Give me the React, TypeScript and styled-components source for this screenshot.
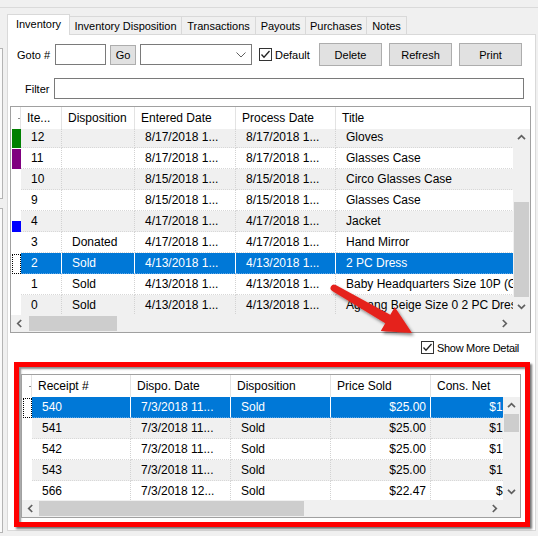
import React from 'react';
import styled, { createGlobalStyle } from 'styled-components';

const GlobalStyle = createGlobalStyle`
  html, body { margin: 0; padding: 0; background: #f0f0f0; }
  body {
    font-family: "Liberation Sans", Arial, sans-serif;
    font-size: 11px;
    color: #000;
  }
  * { box-sizing: border-box; }
`;

const Screen = styled.div`
  position: relative;
  width: 538px;
  height: 536px;
  overflow: hidden;
  display: flex;
  flex-direction: column;
  background: #f0f0f0;
`;

const TopRule = styled.div`
  height: 8px;
  flex: none;
  border-bottom: 1px solid #dadada;
`;

const Main = styled.div`
  flex: 1;
  display: flex;
`;

/* fragments of the panel cut off on the left */
const SideStub = styled.div`
  width: 7px;
  flex: none;
  display: flex;
  flex-direction: column;
`;

const StubPanel = styled.div<{ $top: number; $height: number }>`
  margin-top: ${p => p.$top}px;
  height: ${p => p.$height}px;
  width: 3px;
  background: #fafafa;
  border: 1px solid #b4b4b4;
  border-left: none;
`;

const TabControl = styled.div`
  width: 529px;
  flex: none;
  margin-top: 6px;
  display: flex;
  flex-direction: column;
`;

const TabStrip = styled.div`
  height: 20px;
  display: flex;
  align-items: flex-end;
  position: relative;
  z-index: 1;
`;

const Tab = styled.div<{ $width: number; $active?: boolean }>`
  width: ${p => p.$width}px;
  height: ${p => (p.$active ? 21 : 18)}px;
  margin-bottom: ${p => (p.$active ? -1 : 0)}px;
  margin-left: -1px;
  &:first-child { margin-left: 0; }
  position: relative;
  z-index: ${p => (p.$active ? 2 : 1)};
  display: flex;
  align-items: center;
  justify-content: center;
  padding-bottom: ${p => (p.$active ? 2 : 0)}px;
  background: ${p => (p.$active ? '#ffffff' : '#f0f0f0')};
  border: 1px solid #d9d9d9;
  border-bottom: none;
  white-space: nowrap;
`;

const TabPage = styled.div`
  height: 497px;
  background: #fff;
  border: 1px solid #d9d9d9;
  display: flex;
  flex-direction: column;
`;

const ToolbarRow = styled.div`
  margin-top: 8px;
  height: 23px;
  display: flex;
  align-items: center;
  padding: 0 13px 0 9px;
`;

const FieldLabel = styled.span<{ $width: number }>`
  width: ${p => p.$width}px;
  flex: none;
  white-space: nowrap;
`;

const TextBox = styled.div<{ $width?: number }>`
  height: 21px;
  width: ${p => (p.$width ? `${p.$width}px` : 'auto')};
  flex: ${p => (p.$width ? 'none' : '1')};
  background: #fff;
  border: 1px solid #7a7a7a;
`;

const Button = styled.div<{ $width: number; $height: number; $gap: string }>`
  width: ${p => p.$width}px;
  height: ${p => p.$height}px;
  margin-left: ${p => p.$gap};
  flex: none;
  display: flex;
  align-items: center;
  justify-content: center;
  background: #e1e1e1;
  border: 1px solid #adadad;
`;

const Combo = styled.div`
  margin-left: 4px;
  width: 112px;
  height: 21px;
  flex: none;
  display: flex;
  align-items: center;
  justify-content: flex-end;
  padding-right: 5px;
  background: #fff;
  border: 1px solid #7a7a7a;
`;

const CheckGroup = styled.label<{ $gap: number; $tight?: boolean }>`
  margin-left: ${p => p.$gap}px;
  display: flex;
  align-items: center;
  gap: 3px;
  white-space: nowrap;
  letter-spacing: ${p => (p.$tight ? '-0.3px' : 'normal')};
`;

const CheckSquare = styled.span`
  width: 13px;
  height: 13px;
  flex: none;
  display: flex;
  align-items: center;
  justify-content: center;
  background: #fff;
  border: 1px solid #333;
`;

const FilterRow = styled.div`
  margin-top: 12px;
  height: 21px;
  display: flex;
  align-items: center;
  padding: 0 11px 0 17px;
`;

const MainGridSlot = styled.div`
  margin: 7px 4px 0 2px;
`;

const DetailRow = styled.div`
  height: 29px;
  display: flex;
  align-items: center;
  padding-left: 413px;
`;

/* red annotation frame round the detail grid */
const Highlight = styled.div`
  margin-left: 6px;
  width: 516px;
  height: 165px;
  padding: 7px 4px 4px 2px;
  background: #fff;
  border: 5px solid #ff0000;
  box-shadow: 2px 2px 2px rgba(0, 0, 0, 0.55), inset 2px 2px 2px rgba(0, 0, 0, 0.45);
`;

/* ---------- data grid ---------- */

const GridFrame = styled.div<{ $height: number }>`
  height: ${p => p.$height}px;
  display: flex;
  flex-direction: column;
  background: #fff;
  border: 1px solid #a0a0a0;
  font-size: 12px;
  overflow: hidden;
`;

const HeaderRow = styled.div`
  height: 22px;
  flex: none;
  display: flex;
  background: #fff;
  overflow: hidden;
`;

const HeadCorner = styled.div`
  width: 10px;
  flex: none;
  display: flex;
  align-items: center;
  justify-content: flex-end;
  border-right: 1px solid #e3e3e3;
`;

const Tick = styled.span`
  width: 2px;
  height: 1px;
  margin-top: 1px;
  background: #8a8a8a;
`;

const HeaderCell = styled.div<{ $width: number }>`
  width: ${p => p.$width}px;
  flex: none;
  padding-left: 6px;
  line-height: 22px;
  border-right: 1px solid #e3e3e3;
  white-space: nowrap;
  overflow: hidden;
`;

const Body = styled.div<{ $height: number }>`
  height: ${p => p.$height}px;
  flex: none;
  display: flex;
`;

const Viewport = styled.div`
  flex: 1;
  min-width: 0;
  overflow: hidden;
`;

const RowList = styled.div<{ $offset: number }>`
  margin-top: -${p => p.$offset}px;
`;

const BodyRow = styled.div<{ $tone: 'plain' | 'stripe' | 'selected' }>`
  height: 21px;
  display: flex;
  background: ${p => (p.$tone === 'selected' ? '#0078d7' : p.$tone === 'stripe' ? '#f0f0f0' : '#fff')};
  color: ${p => (p.$tone === 'selected' ? '#fff' : '#000')};
`;

const RowHead = styled.div`
  width: 10px;
  flex: none;
  display: flex;
  align-items: flex-end;
  padding-left: 1px;
  background: #fff;
`;

const Marker = styled.span<{ $color: string; $height: number }>`
  width: 9px;
  height: ${p => p.$height}px;
  background: ${p => p.$color};
`;

const FocusBox = styled.span`
  width: 9px;
  height: 20px;
  border: 1px dotted #000;
`;

const Cell = styled.div<{ $width: number; $right?: boolean; $selected?: boolean }>`
  width: ${p => p.$width}px;
  flex: none;
  padding: ${p => (p.$right ? '0 4px 0 0' : '0 0 0 10px')};
  text-align: ${p => (p.$right ? 'right' : 'left')};
  line-height: 20px;
  white-space: nowrap;
  overflow: hidden;
  border-right: 1px ${p => (p.$selected ? 'solid #ffffff' : 'dotted #d2d2d2')};
  border-bottom: 1px dotted ${p => (p.$selected ? '#5aa5e6' : '#d8d8d8')};
`;

const VBar = styled.div`
  width: 17px;
  flex: none;
  display: flex;
  flex-direction: column;
  background: #f0f0f0;
`;

const ArrowBox = styled.div`
  width: 17px;
  height: 17px;
  flex: none;
  display: flex;
  align-items: center;
  justify-content: center;
`;

const VTrack = styled.div`
  flex: 1;
  display: flex;
  flex-direction: column;
  align-items: center;
`;

const VThumb = styled.div<{ $offset: number; $size: number }>`
  margin-top: ${p => p.$offset}px;
  height: ${p => p.$size}px;
  width: 15px;
  background: #cdcdcd;
`;

const HBar = styled.div`
  height: 17px;
  flex: none;
  display: flex;
  background: #f0f0f0;
`;

const HTrack = styled.div`
  flex: 1;
  display: flex;
  align-items: center;
`;

const HThumb = styled.div<{ $offset: number; $size: number }>`
  margin-left: ${p => p.$offset}px;
  width: ${p => p.$size}px;
  height: 15px;
  background: #cdcdcd;
`;

const Corner = styled.div`
  width: 17px;
  flex: none;
`;

const ChevronSvg = styled.svg<{ $rot: number }>`
  display: block;
  transform: rotate(${p => p.$rot}deg);
`;

const Overlay = styled.svg`
  position: absolute;
  left: 0;
  top: 0;
  pointer-events: none;
`;

type Dir = 'up' | 'down' | 'left' | 'right';
const rotations: Record<Dir, number> = { up: 0, right: 90, down: 180, left: 270 };

const Chevron = ({ dir }: { dir: Dir }) => (
  <ChevronSvg $rot={rotations[dir]} width="9" height="9" viewBox="0 0 9 9">
    <polyline points="1,6.2 4.5,2.7 8,6.2" fill="none" stroke="#606060" strokeWidth="1.7" />
  </ChevronSvg>
);

const Check = () => (
  <svg width="11" height="11" viewBox="0 0 11 11">
    <polyline points="1.5,5.5 4,8.3 9.5,2" fill="none" stroke="#222" strokeWidth="1.3" />
  </svg>
);

interface Column {
  title: string;
  width: number;
  right?: boolean;
}

interface Row {
  cells: string[];
  marker?: { color: string; height: number };
}

interface GridProps {
  columns: Column[];
  rows: Row[];
  selected: number;
  stripe: 0 | 1;
  height: number;
  bodyHeight: number;
  scrollTop: number;
  vThumb: [number, number];
  hThumb: [number, number];
}

const DataGrid = ({ columns, rows, selected, stripe, height, bodyHeight, scrollTop, vThumb, hThumb }: GridProps) => (
  <GridFrame $height={height}>
    <HeaderRow>
      <HeadCorner>
        <Tick />
      </HeadCorner>
      {columns.map(c => (
        <HeaderCell key={c.title} $width={c.width}>
          {c.title}
        </HeaderCell>
      ))}
    </HeaderRow>
    <Body $height={bodyHeight}>
      <Viewport>
        <RowList $offset={scrollTop}>
          {rows.map((r, i) => {
            const isSel = i === selected;
            const tone = isSel ? 'selected' : i % 2 === stripe ? 'stripe' : 'plain';
            return (
              <BodyRow key={i} $tone={tone}>
                <RowHead>
                  {isSel && <FocusBox />}
                  {r.marker && <Marker $color={r.marker.color} $height={r.marker.height} />}
                </RowHead>
                {columns.map((c, j) => (
                  <Cell key={c.title} $width={c.width} $right={c.right} $selected={isSel}>
                    {r.cells[j]}
                  </Cell>
                ))}
              </BodyRow>
            );
          })}
        </RowList>
      </Viewport>
      <VBar>
        <ArrowBox>
          <Chevron dir="up" />
        </ArrowBox>
        <VTrack>
          <VThumb $offset={vThumb[0]} $size={vThumb[1]} />
        </VTrack>
        <ArrowBox>
          <Chevron dir="down" />
        </ArrowBox>
      </VBar>
    </Body>
    <HBar>
      <ArrowBox>
        <Chevron dir="left" />
      </ArrowBox>
      <HTrack>
        <HThumb $offset={hThumb[0]} $size={hThumb[1]} />
      </HTrack>
      <ArrowBox>
        <Chevron dir="right" />
      </ArrowBox>
      <Corner />
    </HBar>
  </GridFrame>
);

const tabs = [
  { label: 'Inventory', width: 63 },
  { label: 'Inventory Disposition', width: 113 },
  { label: 'Transactions', width: 75 },
  { label: 'Payouts', width: 51 },
  { label: 'Purchases', width: 62 },
  { label: 'Notes', width: 41 },
];

const inventoryColumns: Column[] = [
  { title: 'Ite...', width: 41 },
  { title: 'Disposition', width: 73 },
  { title: 'Entered Date', width: 101 },
  { title: 'Process Date', width: 100 },
  { title: 'Title', width: 260 },
];

const inventoryRows: Row[] = [
  { cells: ['12', '', '8/17/2018 1...', '8/17/2018 1...', 'Gloves'], marker: { color: '#008000', height: 20 } },
  { cells: ['11', '', '8/17/2018 1...', '8/17/2018 1...', 'Glasses Case'], marker: { color: '#800080', height: 20 } },
  { cells: ['10', '', '8/15/2018 1...', '8/15/2018 1...', 'Circo Glasses Case'] },
  { cells: ['9', '', '8/15/2018 1...', '8/15/2018 1...', 'Glasses Case'] },
  { cells: ['4', '', '4/17/2018 1...', '4/17/2018 1...', 'Jacket'], marker: { color: '#0000ff', height: 11 } },
  { cells: ['3', 'Donated', '4/17/2018 1...', '4/17/2018 1...', 'Hand Mirror'] },
  { cells: ['2', 'Sold', '4/13/2018 1...', '4/13/2018 1...', '2 PC Dress'] },
  { cells: ['1', 'Sold', '4/13/2018 1...', '4/13/2018 1...', 'Baby Headquarters Size 10P (Girls)'] },
  { cells: ['0', 'Sold', '4/13/2018 1...', '4/13/2018 1...', 'Aghang Beige Size 0 2 PC Dress'] },
];

const detailColumns: Column[] = [
  { title: 'Receipt #', width: 99 },
  { title: 'Dispo. Date', width: 100 },
  { title: 'Disposition', width: 100 },
  { title: 'Price Sold', width: 100, right: true },
  { title: 'Cons. Net', width: 100, right: true },
];

const detailRows: Row[] = [
  { cells: ['540', '7/3/2018 11...', 'Sold', '$25.00', '$12.50'] },
  { cells: ['541', '7/3/2018 11...', 'Sold', '$25.00', '$12.50'] },
  { cells: ['542', '7/3/2018 11...', 'Sold', '$25.00', '$12.50'] },
  { cells: ['543', '7/3/2018 11...', 'Sold', '$25.00', '$12.50'] },
  { cells: ['566', '7/3/2018 12...', 'Sold', '$22.47', '$8.99'] },
];

export default function App() {
  return (
    <>
      <GlobalStyle />
      <Screen>
        <TopRule />
        <Main>
          <SideStub>
            <StubPanel $top={40} $height={151} />
            <StubPanel $top={9} $height={325} />
          </SideStub>
          <TabControl>
            <TabStrip>
              {tabs.map((t, i) => (
                <Tab key={t.label} $width={t.width} $active={i === 0}>
                  {t.label}
                </Tab>
              ))}
            </TabStrip>
            <TabPage>
              <ToolbarRow>
                <FieldLabel $width={38}>Goto #</FieldLabel>
                <TextBox $width={51} />
                <Button $width={26} $height={20} $gap="4px">Go</Button>
                <Combo>
                  <svg width="10" height="6" viewBox="0 0 10 6">
                    <polyline points="0.5,0.5 5,5 9.5,0.5" fill="none" stroke="#606060" strokeWidth="1" />
                  </svg>
                </Combo>
                <CheckGroup $gap={7}>
                  <CheckSquare>
                    <Check />
                  </CheckSquare>
                  Default
                </CheckGroup>
                <Button $width={63} $height={23} $gap="auto">Delete</Button>
                <Button $width={63} $height={23} $gap="7px">Refresh</Button>
                <Button $width={63} $height={23} $gap="7px">Print</Button>
              </ToolbarRow>
              <FilterRow>
                <FieldLabel $width={29}>Filter</FieldLabel>
                <TextBox />
              </FilterRow>
              <MainGridSlot>
                <DataGrid
                  columns={inventoryColumns}
                  rows={inventoryRows}
                  selected={6}
                  stripe={0}
                  height={227}
                  bodyHeight={186}
                  scrollTop={2}
                  vThumb={[56, 95]}
                  hThumb={[1, 88]}
                />
              </MainGridSlot>
              <DetailRow>
                <CheckGroup $gap={0} $tight>
                  <CheckSquare>
                    <Check />
                  </CheckSquare>
                  Show More Detail
                </CheckGroup>
              </DetailRow>
              <Highlight>
                <DataGrid
                  columns={detailColumns}
                  rows={detailRows}
                  selected={0}
                  stripe={1}
                  height={144}
                  bodyHeight={103}
                  scrollTop={0}
                  vThumb={[0, 18]}
                  hThumb={[0, 265]}
                />
              </Highlight>
            </TabPage>
          </TabControl>
        </Main>
        <Overlay width="538" height="536" viewBox="0 0 538 536">
          <defs>
            <filter id="arrowShadow" x="-20%" y="-20%" width="140%" height="140%">
              <feDropShadow dx="2" dy="2.5" stdDeviation="1.4" floodColor="#000" floodOpacity="0.45" />
            </filter>
          </defs>
          <path
            d="M335.75,284.97 L390.25,314.67 L394.75,306.9 L412,333 L380.75,331.1 L385.25,323.33 L332.25,291.03 A3.5,3.5 0 0 1 335.75,284.97 Z"
            fill="#e5231c"
            filter="url(#arrowShadow)"
          />
        </Overlay>
      </Screen>
    </>
  );
}
